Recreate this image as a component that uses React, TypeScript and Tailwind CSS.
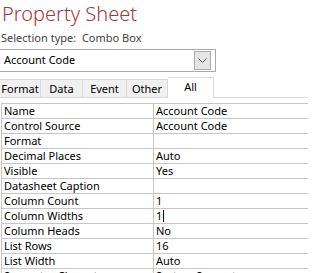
const rows: [string, string][] = [
  ["Name", "Account Code"],
  ["Control Source", "Account Code"],
  ["Format", ""],
  ["Decimal Places", "Auto"],
  ["Visible", "Yes"],
  ["Datasheet Caption", ""],
  ["Column Count", "1"],
  ["Column Widths", "1"],
  ["Column Heads", "No"],
  ["List Rows", "16"],
  ["List Width", "Auto"],
  ["Separator Characters", "System Separator"],
];

const tabs = [
  { label: "Format", w: "w-[41px]" },
  { label: "Data", w: "w-[42px]" },
  { label: "Event", w: "w-[44px]" },
  { label: "Other", w: "w-[41px]" },
];

export default function App() {
  return (
    <div className="w-[308px] h-[273px] overflow-hidden bg-white text-[11px] text-black font-['Noto_Sans',sans-serif]">
      {/* Header */}
      <div className="pl-[2px] h-[30px] text-[20px] font-light leading-[28px] text-[#a4373a]">
        Property Sheet
      </div>
      <div className="pl-[1px] h-[19px] leading-[15px] text-[#444]">
        Selection type:&nbsp;&nbsp;Combo Box
      </div>

      {/* Combo box */}
      <div className="w-[217px] h-[23px] -ml-px border border-[#ababab] flex items-center justify-between">
        <span className="pl-[4px]">Account Code</span>
        <div className="w-[17px] h-[19px] mr-[4px] bg-[#e5e5e5] border border-[#adadad] flex items-center justify-center">
          <svg width="9" height="5" viewBox="0 0 9 5" fill="none" stroke="#555" strokeWidth="1">
            <path d="M0.5 0.5 L4.5 4.5 L8.5 0.5" />
          </svg>
        </div>
      </div>

      {/* Tabs */}
      <div className="mt-[5px] flex items-end h-[21px]">
        {tabs.map((t) => (
          <div
            key={t.label}
            className={`${t.w} h-[19px] bg-[#f0f0f0] border-t border-r border-b border-[#d9d9d9] flex items-center justify-center leading-none`}
          >
            {t.label}
          </div>
        ))}
        <div className="w-[46px] h-[21px] bg-white border-t border-r border-[#d9d9d9] flex items-center justify-center leading-none pb-[3px]">
          All
        </div>
        <div className="flex-1 h-px bg-[#d9d9d9] self-end" />
      </div>

      {/* Property grid */}
      <div className="mt-[5px] ml-[1px] border-t border-[#c6c6c6]">
        {rows.map(([k, v]) => (
          <div key={k} className="flex h-[15px] border-b border-[#c6c6c6] leading-[14px]">
            <div className="w-[153px] pl-[2px] border-l border-r border-[#c6c6c6] whitespace-nowrap">
              {k}
            </div>
            <div className="flex-1 pl-[2px] whitespace-nowrap flex items-center">
              {v}
              {k === "Column Widths" && <span className="ml-px w-px h-[12px] bg-black" />}
            </div>
          </div>
        ))}
      </div>
    </div>
  );
}
